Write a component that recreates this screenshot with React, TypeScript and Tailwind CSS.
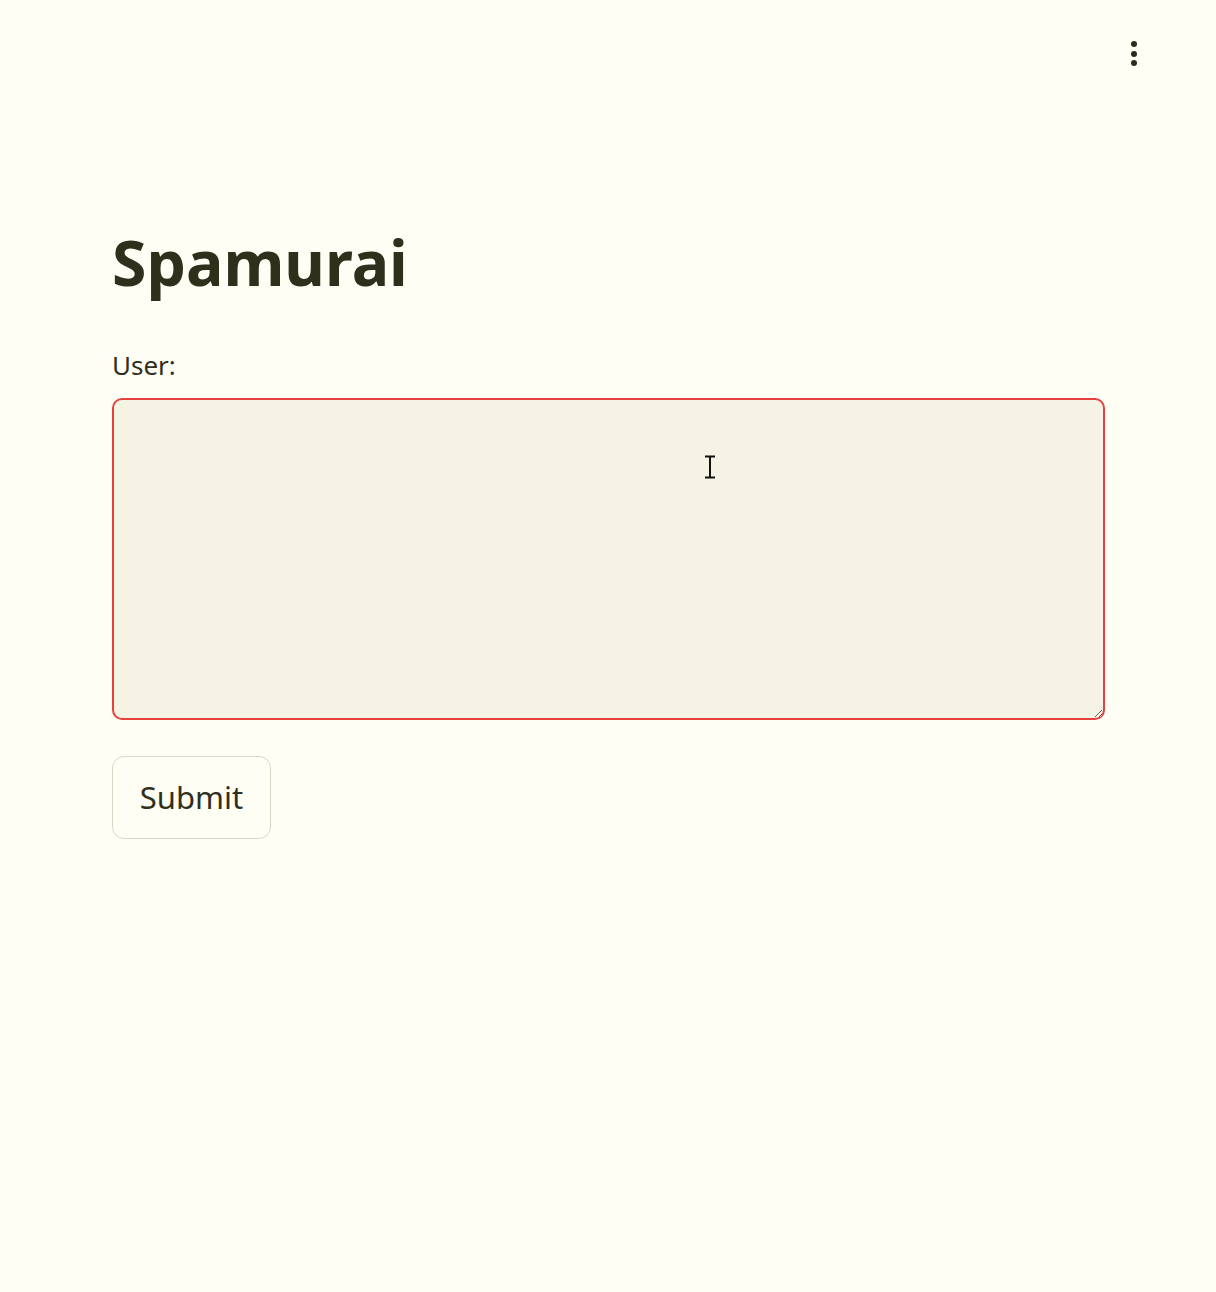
import React from "react";

export default function App() {
  return (
    <div className="min-h-[1292px] w-full bg-[#fffef5] text-[#2f2f1c] relative" style={{ fontFamily: "'Noto Sans', sans-serif" }}>
      <div className="flex justify-end pr-[75px] pt-[37px]">
        <button className="flex flex-col items-center gap-[3.5px] p-1">
          <span className="block w-[6px] h-[6px] rounded-full bg-[#2b2b1a]" />
          <span className="block w-[6px] h-[6px] rounded-full bg-[#2b2b1a]" />
          <span className="block w-[6px] h-[6px] rounded-full bg-[#2b2b1a]" />
        </button>
      </div>
      <div className="px-[112px] w-[1217px]">
        <div className="pt-[150px]">
          <h1 className="text-[62.5px] font-bold leading-[84px]">Spamurai</h1>
        </div>
        <label className="block mt-[44px] text-[26px] leading-[34px]">User:</label>
        <div className="mt-[16px] relative">
          <textarea className="block w-[993px] h-[322px] rounded-[10px] border-2 border-[#e8403c] bg-[#f5f3e4] outline-none resize-y" />
          <svg className="absolute left-[592px] top-[57px]" width="12" height="24" viewBox="0 0 12 24">
            <path d="M1 1.5h10M6 1.5v21M1 22.5h10" stroke="#111" strokeWidth="2" fill="none" />
          </svg>
        </div>
        <button className="mt-[36px] w-[159px] h-[83px] rounded-[12px] border border-[#d9d8c6] bg-[#fffef5] text-[31px]">Submit</button>
      </div>
    </div>
  );
}
